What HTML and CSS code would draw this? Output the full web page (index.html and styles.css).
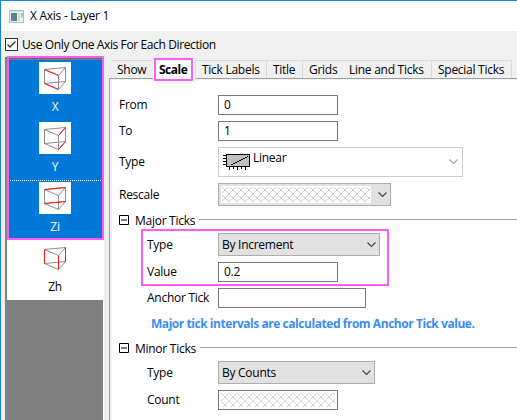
FILE: index.html
```html
<!DOCTYPE html>
<html lang="en">
<head>
    <meta charset="UTF-8">
    <title>X Axis - Layer 1</title>
    <link rel="stylesheet" href="styles.css">
</head>
<body>
    <svg class="defs" width="0" height="0">
        <defs>
            <pattern id="hatch" width="8" height="8" patternUnits="userSpaceOnUse">
                <path d="M0 0L8 8M8 0L0 8" stroke="#d0d0d0" stroke-width="1"/>
            </pattern>
            <path id="cube" d="M5.5 7.5L26.5 5.5L19.5 13.5ZM5.5 21.5L26.5 19.5L19.5 27.5ZM5.5 7.5V21.5M26.5 5.5V19.5M19.5 13.5V27.5"/>
            <path id="chevron" d="M0.5 0.5L4.5 4.5L8.5 0.5"/>
        </defs>
    </svg>

    <div class="window">
        <div class="titlebar">
            <svg class="app-icon" width="15" height="13" viewBox="0 0 15 13">
                <rect x="0.5" y="0.5" width="14" height="12" fill="#eceef0" stroke="#b4bac0"/>
                <rect x="1" y="1" width="13" height="1" fill="#d3d8dd"/>
                <rect x="2" y="3" width="6" height="8" fill="#4b8b83"/>
                <rect x="2" y="3" width="2" height="8" fill="#5b7fa6"/>
                <rect x="9" y="3" width="2" height="8" fill="#d5dadd"/>
                <rect x="12" y="3" width="2" height="4" fill="#a5c9ae"/>
            </svg>
            <span class="title-text">X Axis - Layer 1</span>
        </div>

        <div class="option">
            <svg width="13" height="13" viewBox="0 0 13 13">
                <rect x="0.5" y="0.5" width="12" height="12" fill="#fff" stroke="#333"/>
                <path d="M2.5 6.5L5 9L10.5 3.5" fill="none" stroke="#333" stroke-width="1.3"/>
            </svg>
            <span class="option-text">Use Only One Axis For Each Direction</span>
        </div>

        <div class="main">
            <div class="axis-list">
                <div class="axis selected">
                    <svg class="axis-icon" width="32" height="32">
                        <use href="#cube"/>
                        <path class="red" d="M5.5 7.5L19.5 13.5M5.5 21.5L19.5 27.5"/>
                    </svg>
                    <span>X</span>
                </div>
                <div class="axis selected">
                    <svg class="axis-icon" width="32" height="32">
                        <use href="#cube"/>
                        <path class="red" d="M19.5 13.5L26.5 5.5M19.5 27.5L26.5 19.5"/>
                    </svg>
                    <span>Y</span>
                </div>
                <div class="axis selected focused">
                    <svg class="axis-icon" width="32" height="32">
                        <use href="#cube"/>
                        <path class="red" d="M5.5 7.5L26.5 5.5M5.5 21.5L26.5 19.5"/>
                    </svg>
                    <span>Zi</span>
                </div>
                <div class="axis">
                    <svg class="axis-icon" width="32" height="32">
                        <use href="#cube"/>
                        <path class="red" d="M5.5 7.5V21.5M26.5 5.5V19.5M19.5 13.5V27.5"/>
                    </svg>
                    <span>Zh</span>
                </div>
                <div class="mark mark-axes"></div>
            </div>

            <div class="pages">
                <div class="tabs">
                    <div class="tab tab-show">Show</div>
                    <div class="tab tab-scale active">Scale<div class="mark mark-tab"></div></div>
                    <div class="tab tab-labels">Tick Labels</div>
                    <div class="tab tab-title">Title</div>
                    <div class="tab tab-grids">Grids</div>
                    <div class="tab tab-line">Line and Ticks</div>
                    <div class="tab tab-special">Special Ticks</div>
                </div>

                <div class="panel">
                    <div class="row">
                        <label>From</label>
                        <div class="input">0</div>
                    </div>
                    <div class="row">
                        <label>To</label>
                        <div class="input">1</div>
                    </div>
                    <div class="row">
                        <label>Type</label>
                        <div class="combo combo-disabled">
                            <svg class="linear-icon" width="28" height="17" viewBox="0 0 28 17" shape-rendering="crispEdges">
                                <rect x="3.5" y="0.5" width="23" height="12" fill="#c0c0c0" stroke="#000"/>
                                <path d="M0 1.5H3M0 4.5H3M0 7.5H3M0 10.5H3M6.5 13V16M10.5 13V15M14.5 13V16M18.5 13V15M22.5 13V16" stroke="#000" fill="none"/>
                                <path d="M8 10.5H10M10 9.5H12M12 8.5H14M14 7.5H16M16 6.5H18M18 5.5H20M20 4.5H22M22 3.5H24M24 2.5H25" stroke="#000" fill="none"/>
                            </svg>
                            <span class="linear-text">Linear</span>
                            <svg class="chevron" width="9" height="6"><use href="#chevron"/></svg>
                        </div>
                    </div>
                    <div class="row">
                        <label>Rescale</label>
                        <div class="combo combo-rescale">
                            <svg class="hatch" width="150" height="17"><rect width="150" height="17" fill="#fff"/><rect x="1" y="1" width="148" height="15" fill="url(#hatch)"/></svg>
                            <svg class="chevron" width="9" height="6"><use href="#chevron"/></svg>
                        </div>
                    </div>

                    <div class="group">
                        <svg width="10" height="10"><path d="M0.5 0.5H9.5V9.5H0.5ZM2 5H8" fill="none" stroke="#000"/></svg>
                        <span class="group-text">Major Ticks</span>
                        <hr>
                    </div>
                    <div class="row sub">
                        <label>Type</label>
                        <div class="combo combo-increment">By Increment
                            <svg class="chevron" width="9" height="6"><use href="#chevron"/></svg>
                        </div>
                        <div class="mark mark-major"></div>
                    </div>
                    <div class="row sub">
                        <label>Value</label>
                        <div class="input">0.2</div>
                    </div>
                    <div class="row sub">
                        <label class="anchor-label">Anchor Tick</label>
                        <div class="input input-anchor"></div>
                    </div>
                    <div class="note">Major tick intervals are calculated from Anchor Tick value.</div>

                    <div class="group">
                        <svg width="10" height="10"><path d="M0.5 0.5H9.5V9.5H0.5ZM2 5H8" fill="none" stroke="#000"/></svg>
                        <span class="group-text">Minor Ticks</span>
                        <hr>
                    </div>
                    <div class="row sub">
                        <label>Type</label>
                        <div class="combo combo-counts">By Counts
                            <svg class="chevron" width="9" height="6"><use href="#chevron"/></svg>
                        </div>
                    </div>
                    <div class="row sub">
                        <label>Count</label>
                        <div class="input input-count">
                            <svg width="114" height="14"><rect width="114" height="14" fill="url(#hatch)"/></svg>
                        </div>
                    </div>
                </div>
            </div>
        </div>
    </div>
</body>
</html>
```

FILE: styles.css
```css
* {
    box-sizing: border-box;
}

body {
    margin: 0;
    font-family: "Open Sans", "Noto Sans", sans-serif;
    font-size: 12px;
    line-height: 16px;
    letter-spacing: -0.27px;
    color: #000;
    white-space: nowrap;
    overflow: hidden;
}

svg {
    display: block;
    flex: none;
}

.defs {
    position: absolute;
}

.window {
    display: flex;
    flex-direction: column;
    width: 517px;
    height: 420px;
    background: #f0f0f0;
    border-top: 1px solid #1883d7;
    border-left: 1px solid #1883d7;
}

.titlebar {
    display: flex;
    align-items: center;
    gap: 6px;
    height: 30px;
    padding-left: 8px;
    background: #fff;
}

.option {
    display: flex;
    align-items: center;
    gap: 4px;
    height: 26px;
    padding: 1px 0 0 4px;
}

.option-text {
    letter-spacing: -0.38px;
}

.main {
    display: flex;
    flex: 1;
    gap: 5px;
    padding-left: 4px;
}

/* axis list */
.axis-list {
    position: relative;
    width: 99px;
    padding-top: 1px;
    background: #808080;
    border: 2px solid #696969;
    border-left-color: #808080;
    border-right: 1px solid #fff;
    border-bottom: none;
}

.axis {
    display: flex;
    flex-direction: column;
    align-items: center;
    gap: 5px;
    height: 60px;
    padding-top: 2px;
    background: #fff;
}

.axis.selected {
    color: #fff;
    background: #0078d7;
}

.axis.focused {
    padding-top: 1px;
    border-top: 1px dotted #fff;
}

.axis-icon {
    background: #fff;
    fill: none;
    stroke: #8c8c8c;
}

.axis-icon .red {
    stroke: #f11;
}

/* magenta highlight frames */
.mark {
    position: absolute;
    border: 2px solid #ff5cf4;
    pointer-events: none;
}

.mark-axes {
    top: -3px;
    left: 0;
    width: 97px;
    height: 184px;
}

.mark-tab {
    top: -1px;
    left: 1px;
    width: 39px;
    height: 23px;
}

.mark-major {
    top: -4px;
    left: -6px;
    width: 248px;
    height: 57px;
}

/* tabs */
.pages {
    flex: 1;
    display: flex;
    flex-direction: column;
    padding-top: 1px;
}

.tabs {
    display: flex;
    align-items: flex-end;
    height: 20px;
    padding-left: 2px;
}

.tab {
    height: 18px;
    padding-left: 6px;
    line-height: 18px;
    border-top: 1px solid #d9d9d9;
    border-right: 1px solid #d9d9d9;
}

.tab.active {
    position: relative;
    z-index: 1;
    height: 21px;
    margin-bottom: -1px;
    line-height: 22px;
    font-weight: bold;
    background: #fff;
}

.tab-show { width: 42px; border-right: none; }
.tab-scale { width: 43px; letter-spacing: -0.5px; }
.tab-labels { width: 71px; }
.tab-title { width: 36px; }
.tab-grids { width: 40px; border-right: none; }
.tab-line { width: 89px; }
.tab-special { width: 80px; }

.panel {
    flex: 1;
    display: flex;
    flex-direction: column;
    gap: 6px;
    padding: 16px 0 0 9px;
    background: #fff;
    border-top: 1px solid #a0a0a0;
    border-left: 1px solid #a0a0a0;
    box-shadow: inset 2px 1px #f0f0f0;
}

/* form rows */
.row {
    position: relative;
    display: flex;
    align-items: center;
}

.row label {
    width: 99px;
}

.row.sub {
    padding-left: 28px;
}

.row.sub label {
    width: 71px;
}

.row .mark-major {
    left: 22px;
}

.input {
    width: 120px;
    height: 20px;
    padding-left: 5px;
    line-height: 18px;
    border: 1px solid #7a7a7a;
}

.input-anchor {
    width: 148px;
}

.input-count {
    padding: 2px;
}

.combo {
    display: flex;
    align-items: center;
    height: 23px;
    padding: 0 3px;
    background: #e1e1e1;
    border: 1px solid #adadad;
}

.combo-increment { width: 162px; }
.combo-counts { width: 157px; }

.combo-rescale {
    width: 173px;
    padding-left: 2px;
}

.combo-disabled {
    width: 245px;
    height: 30px;
    padding: 0 4px;
    background: #fff;
    border-color: #ccc;
}

.linear-text {
    margin: -8px 0 0 2px;
}

.chevron {
    margin-left: auto;
    fill: none;
    stroke: #444;
    stroke-width: 1.2;
}

.combo-disabled .chevron {
    stroke: #aaa;
}

.group {
    display: flex;
    height: 15px;
}

.group svg {
    margin: 3px 6px 0 0;
}

.group-text {
    line-height: 18px;
}

.group hr {
    flex: 1;
    height: 1px;
    margin: 7px 0 0 4px;
    border: none;
    background: #a0a0a0;
}

.note {
    height: 20px;
    padding-left: 32px;
    line-height: 19px;
    font-weight: bold;
    letter-spacing: -0.45px;
    color: #3a8cf7;
}
```
